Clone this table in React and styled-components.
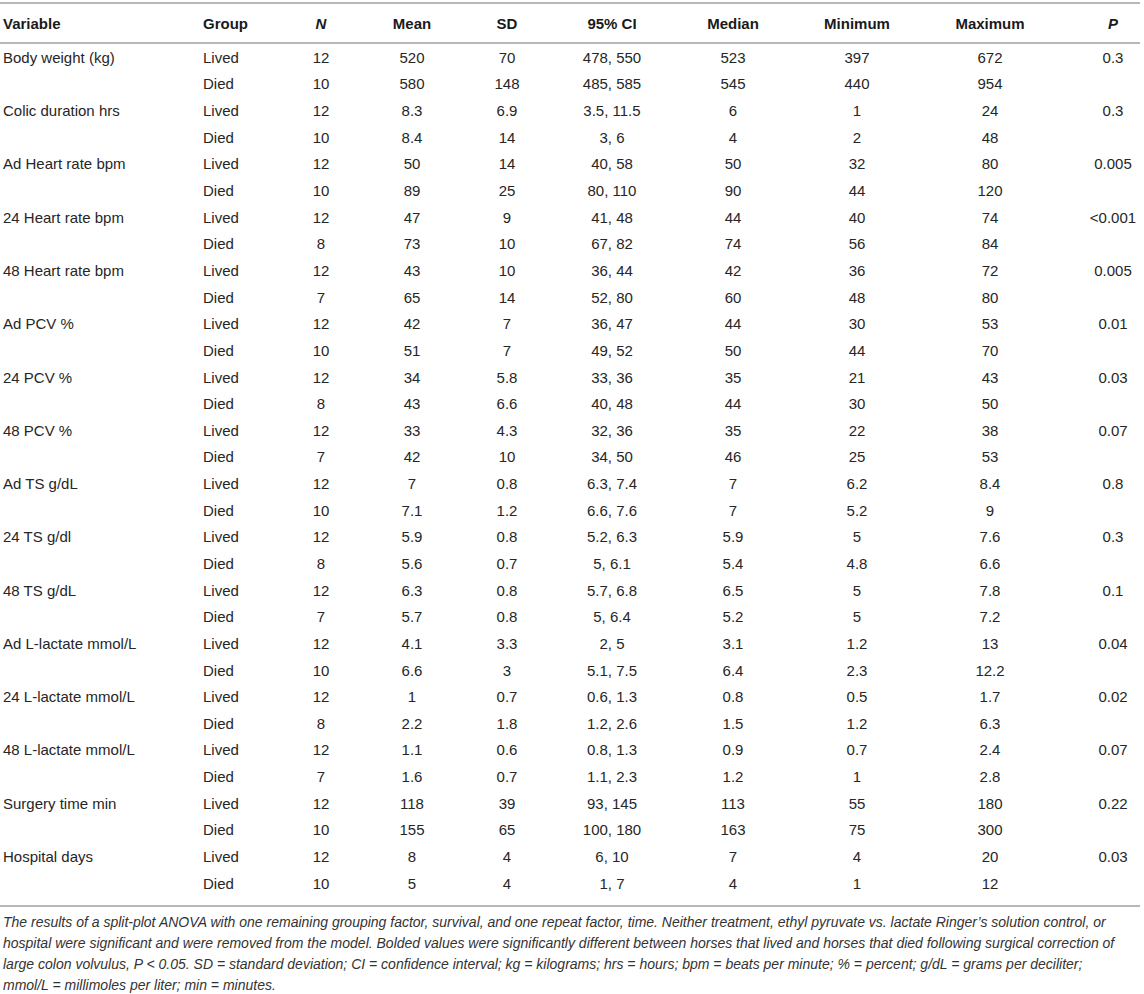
import React from 'react';
import styled, { createGlobalStyle } from 'styled-components';

const GlobalStyle = createGlobalStyle`
  body {
    margin: 0;
    background: #ffffff;
    font-family: "Liberation Sans", Arial, sans-serif;
    color: #222;
  }
`;

const Wrapper = styled.div`
  width: 1140px;
  padding-top: 2px;
`;

const Table = styled.table`
  width: 1140px;
  border-collapse: collapse;
  table-layout: fixed;
  border-top: 2px solid #b8b8b8;
  border-bottom: 2px solid #b8b8b8;
  font-size: 15px;
`;

const HeadCell = styled.th`
  height: 38px;
  padding: 0 0 0 ${props => props.$pl || 0}px;
  text-align: ${props => props.$align};
  font-weight: bold;
  font-style: ${props => (props.$italic ? 'italic' : 'normal')};
  color: #1a1a1a;
  border-bottom: 2px solid #b8b8b8;
  vertical-align: middle;
`;

const Cell = styled.td`
  height: 26.65px;
  padding: 0 0 ${props => (props.$last ? 8 : 0)}px ${props => props.$pl || 0}px;
  text-align: ${props => props.$align};
  color: #262626;
  white-space: nowrap;
  vertical-align: middle;
  line-height: 17px;
`;

const Caption = styled.p`
  margin: 5px 0 0;
  padding-left: 3px;
  font-size: 14px;
  font-style: italic;
  line-height: 21px;
  color: #333;
  white-space: nowrap;
`;

const columns = [
  { key: 'variable', label: 'Variable', width: 200, align: 'left', pl: 3 },
  { key: 'group', label: 'Group', width: 80, align: 'left', pl: 3 },
  { key: 'n', label: 'N', width: 82, align: 'center', italic: true },
  { key: 'mean', label: 'Mean', width: 100, align: 'center' },
  { key: 'sd', label: 'SD', width: 90, align: 'center' },
  { key: 'ci', label: '95% CI', width: 120, align: 'center' },
  { key: 'median', label: 'Median', width: 122, align: 'center' },
  { key: 'min', label: 'Minimum', width: 126, align: 'center' },
  { key: 'max', label: 'Maximum', width: 140, align: 'center' },
  { key: 'p', label: 'P', width: 80, align: 'center', italic: true, pl: 26 },
];

const data = [
  ['Body weight (kg)', ['12', '520', '70', '478, 550', '523', '397', '672', '0.3'], ['10', '580', '148', '485, 585', '545', '440', '954']],
  ['Colic duration hrs', ['12', '8.3', '6.9', '3.5, 11.5', '6', '1', '24', '0.3'], ['10', '8.4', '14', '3, 6', '4', '2', '48']],
  ['Ad Heart rate bpm', ['12', '50', '14', '40, 58', '50', '32', '80', '0.005'], ['10', '89', '25', '80, 110', '90', '44', '120']],
  ['24 Heart rate bpm', ['12', '47', '9', '41, 48', '44', '40', '74', '<0.001'], ['8', '73', '10', '67, 82', '74', '56', '84']],
  ['48 Heart rate bpm', ['12', '43', '10', '36, 44', '42', '36', '72', '0.005'], ['7', '65', '14', '52, 80', '60', '48', '80']],
  ['Ad PCV %', ['12', '42', '7', '36, 47', '44', '30', '53', '0.01'], ['10', '51', '7', '49, 52', '50', '44', '70']],
  ['24 PCV %', ['12', '34', '5.8', '33, 36', '35', '21', '43', '0.03'], ['8', '43', '6.6', '40, 48', '44', '30', '50']],
  ['48 PCV %', ['12', '33', '4.3', '32, 36', '35', '22', '38', '0.07'], ['7', '42', '10', '34, 50', '46', '25', '53']],
  ['Ad TS g/dL', ['12', '7', '0.8', '6.3, 7.4', '7', '6.2', '8.4', '0.8'], ['10', '7.1', '1.2', '6.6, 7.6', '7', '5.2', '9']],
  ['24 TS g/dl', ['12', '5.9', '0.8', '5.2, 6.3', '5.9', '5', '7.6', '0.3'], ['8', '5.6', '0.7', '5, 6.1', '5.4', '4.8', '6.6']],
  ['48 TS g/dL', ['12', '6.3', '0.8', '5.7, 6.8', '6.5', '5', '7.8', '0.1'], ['7', '5.7', '0.8', '5, 6.4', '5.2', '5', '7.2']],
  ['Ad L-lactate mmol/L', ['12', '4.1', '3.3', '2, 5', '3.1', '1.2', '13', '0.04'], ['10', '6.6', '3', '5.1, 7.5', '6.4', '2.3', '12.2']],
  ['24 L-lactate mmol/L', ['12', '1', '0.7', '0.6, 1.3', '0.8', '0.5', '1.7', '0.02'], ['8', '2.2', '1.8', '1.2, 2.6', '1.5', '1.2', '6.3']],
  ['48 L-lactate mmol/L', ['12', '1.1', '0.6', '0.8, 1.3', '0.9', '0.7', '2.4', '0.07'], ['7', '1.6', '0.7', '1.1, 2.3', '1.2', '1', '2.8']],
  ['Surgery time min', ['12', '118', '39', '93, 145', '113', '55', '180', '0.22'], ['10', '155', '65', '100, 180', '163', '75', '300']],
  ['Hospital days', ['12', '8', '4', '6, 10', '7', '4', '20', '0.03'], ['10', '5', '4', '1, 7', '4', '1', '12']],
];

const rows = data.flatMap(([name, lived, died]) => [
  [name, 'Lived', ...lived],
  ['', 'Died', ...died, ''],
]);

export default function App() {
  return (
    <Wrapper>
      <GlobalStyle />
      <Table>
        <colgroup>
          {columns.map(c => (
            <col key={c.key} style={{ width: c.width }} />
          ))}
        </colgroup>
        <thead>
          <tr>
            {columns.map(c => (
              <HeadCell key={c.key} $align={c.align} $italic={c.italic} $pl={c.pl}>
                {c.label}
              </HeadCell>
            ))}
          </tr>
        </thead>
        <tbody>
          {rows.map((row, i) => (
            <tr key={i}>
              {row.map((value, j) => (
                <Cell
                  key={j}
                  $align={columns[j].align}
                  $pl={columns[j].pl}
                  $last={i === rows.length - 1}
                >
                  {value}
                </Cell>
              ))}
            </tr>
          ))}
        </tbody>
      </Table>
      <Caption>
        The results of a split-plot ANOVA with one remaining grouping factor, survival, and one repeat factor, time. Neither treatment, ethyl pyruvate vs. lactate Ringer’s solution control, or
        <br />
        hospital were significant and were removed from the model. Bolded values were significantly different between horses that lived and horses that died following surgical correction of
        <br />
        large colon volvulus, P &lt; 0.05. SD = standard deviation; CI = confidence interval; kg = kilograms; hrs = hours; bpm = beats per minute; % = percent; g/dL = grams per deciliter;
        <br />
        mmol/L = millimoles per liter; min = minutes.
      </Caption>
    </Wrapper>
  );
}
